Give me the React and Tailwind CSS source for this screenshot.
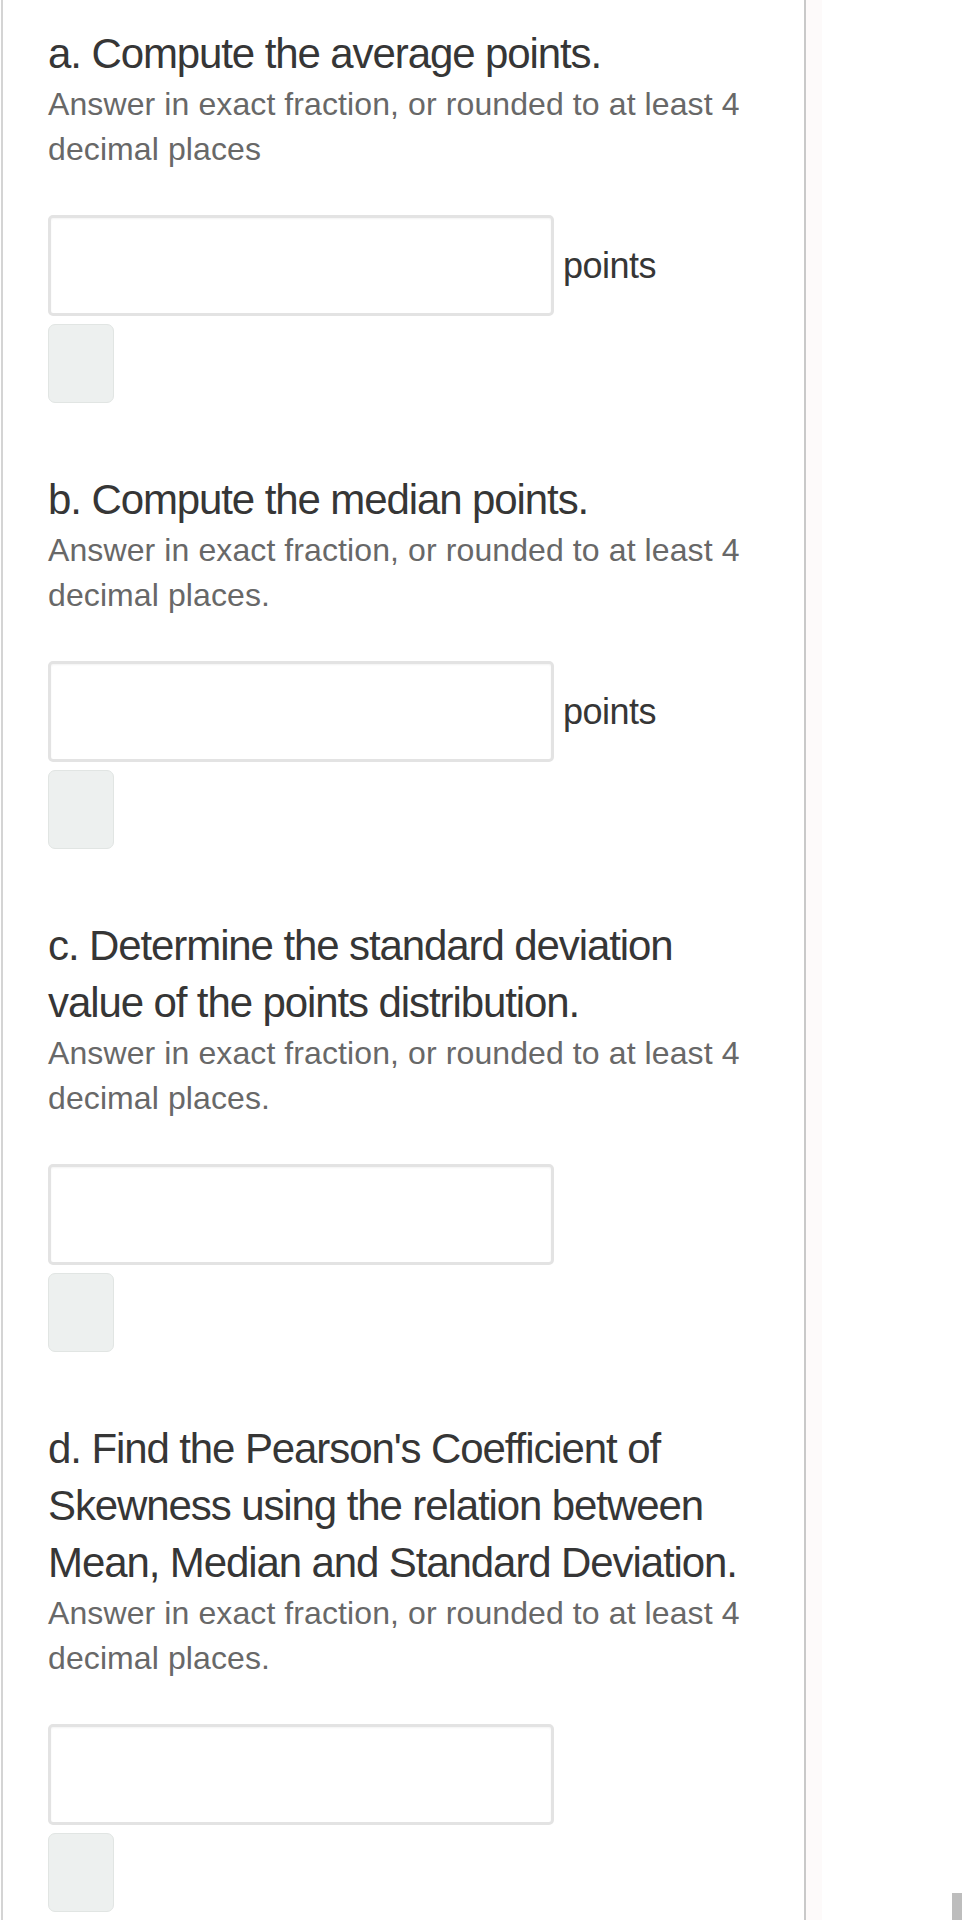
import React from "react";

const sections = [
  {
    title: "a. Compute the average points.",
    sub: "Answer in exact fraction, or rounded to at least 4 decimal places",
    unit: "points",
  },
  {
    title: "b. Compute the median points.",
    sub: "Answer in exact fraction, or rounded to at least 4 decimal places.",
    unit: "points",
  },
  {
    title: "c. Determine the standard deviation value of the points distribution.",
    sub: "Answer in exact fraction, or rounded to at least 4 decimal places.",
    unit: null,
  },
  {
    title:
      "d. Find the Pearson's Coefficient of Skewness using the relation between Mean, Median and Standard Deviation.",
    sub: "Answer in exact fraction, or rounded to at least 4 decimal places.",
    unit: null,
  },
];

function Section({ title, sub, unit }) {
  return (
    <div className="mb-[68px]">
      <div className="text-[42px] leading-[57px] tracking-[-1.1px] text-[#363636]">{title}</div>
      <div className="text-[32px] leading-[45px] tracking-[0.1px] text-[#686868]">{sub}</div>
      <div className="mt-[43px] flex items-center">
        <div className="h-[101px] w-[506px] rounded-[5px] border-[3px] border-[#e3e3e3] bg-white shadow-[inset_0_1px_2px_rgba(0,0,0,0.05)]" />
        {unit && (
          <span className="ml-[9px] text-[36px] tracking-[-0.5px] text-[#363636]">{unit}</span>
        )}
      </div>
      <div className="mt-[8px] h-[79px] w-[66px] rounded-[7px] border border-[#e1e5e3] bg-[#edf0ef]" />
    </div>
  );
}

export default function App() {
  return (
    <div
      className="relative flex h-[1920px] w-full overflow-hidden bg-white"
      style={{ fontFamily: '"Liberation Sans", Arial, sans-serif' }}
    >
      <div className="ml-[1px] h-full w-[805px] shrink-0 border-l-2 border-r-2 border-l-[#d4d4d4] border-r-[#c9c9c9] bg-white pl-[45px] pr-[46px] pt-[25px]">
        {sections.map((s, i) => (
          <Section key={i} {...s} />
        ))}
      </div>
      <div className="h-full w-[16px] bg-[#fdfafa]" />
      <div className="h-full flex-1 bg-white" />
      <div className="absolute bottom-0 right-0 h-[27px] w-[10px] bg-[#bdbdbd]" />
    </div>
  );
}
